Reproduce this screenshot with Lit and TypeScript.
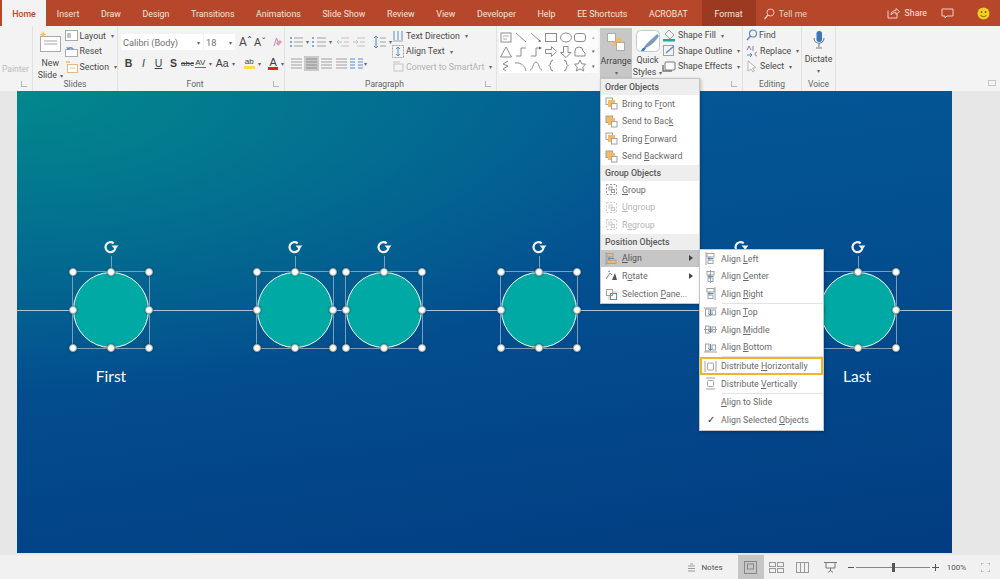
import { LitElement, html, css, svg } from "lit";
import { customElement } from "lit/decorators.js";

const ico = (w: number, h: number, body: unknown, cls = "") =>
  html`<svg class="ic ${cls}" width=${w} height=${h} viewBox="0 0 ${w} ${h}" fill="none">${body}</svg>`;

const accel = (s: string) => {
  const i = s.indexOf("&");
  if (i < 0) return s;
  return html`${s.slice(0, i)}<u>${s[i + 1]}</u>${s.slice(i + 2)}`;
};

const G = "#a2a2a2", O = "#f2b968", B = "#5c8cc4";

const orderIcon = (front: boolean) =>
  ico(13, 13, svg`<rect x="1" y="1" width="6.500" height="6.500" fill=${front ? "#fff" : O} stroke=${G}/><rect x="3" y="3" width="7" height="7" fill=${O}/><rect x="6.500" y="6.500" width="5.500" height="5.500" fill="#fff" stroke=${G}/>`);
const groupIcon = (c: string) =>
  ico(13, 13, svg`<rect x="1.500" y="1.500" width="10" height="10" stroke=${c} stroke-dasharray="2 1.500"/><rect x="4" y="4" width="3" height="3" stroke=${c}/><rect x="6.500" y="6.500" width="3" height="3" stroke=${c}/>`);
const alignH = (x: number) =>
  ico(13, 13, svg`<rect x="3" y="1.500" width="7" height="3.500" stroke=${G}/><rect x="4" y="8" width="5" height="3.500" stroke=${G}/><path d="M${x} 0V13" stroke=${G}/><path d="M9.500 6.500H4M6 4.500L4 6.500l2 2" stroke=${B}/>`);
const alignV = (y: number) =>
  ico(13, 13, svg`<rect x="1.500" y="3" width="3.500" height="7" stroke=${G}/><rect x="8" y="4" width="3.500" height="5" stroke=${G}/><path d="M0 ${y}H13" stroke=${G}/><path d="M6.500 3v6.500M4.500 7.500l2 2 2-2" stroke=${B}/>`);
const distH = ico(13, 13, svg`<path d="M1 1v11M12 1v11" stroke=${G}/><rect x="3.500" y="3" width="6" height="7" rx="1" stroke=${G}/>`);
const distV = ico(13, 13, svg`<path d="M2 1h9M2 12h9" stroke=${G}/><rect x="3.500" y="3.500" width="6" height="6" rx="1" stroke=${G}/>`);

const orderItems = [
  { t: "Bring to F&ront", i: orderIcon(true) },
  { t: "Send to Bac&k", i: orderIcon(false) },
  { t: "Bring &Forward", i: orderIcon(true) },
  { t: "Send &Backward", i: orderIcon(false) },
];
const groupItems = [
  { t: "&Group", i: groupIcon("#999"), d: false },
  { t: "&Ungroup", i: groupIcon("#ccc"), d: true },
  { t: "R&egroup", i: groupIcon("#ccc"), d: true },
];
const subSets = [
  [{ t: "Align &Left", i: alignH(2) }, { t: "Align &Center", i: alignH(6.500) }, { t: "Align &Right", i: alignH(11) }],
  [{ t: "Align &Top", i: alignV(2) }, { t: "Align &Middle", i: alignV(6.500) }, { t: "Align &Bottom", i: alignV(11) }],
];

const tabs = ["Home", "Insert", "Draw", "Design", "Transitions", "Animations", "Slide Show", "Review", "View", "Developer", "Help", "EE Shortcuts", "ACROBAT", "Format"];
const centers = [111, 295, 384, 539, 741, 858];

const lines3 = (x1: number, x2: number, c = "#a0a0a0") =>
  svg`<path d="M${x1} 2H${x2}M${x1} 5H${x2}M${x1} 8H${x2}M${x1} 11H${x2}" stroke=${c}/>`;

const S = "#8c8c8c";
const galleryShapes = [
  svg`<rect x="2" y="2" width="10" height="9" stroke=${S}/><path d="M4 5h6M4 8h4" stroke="#aaa"/>`,
  svg`<path d="M2 2l10 9" stroke=${S}/>`,
  svg`<path d="M2 2l9 8" stroke=${S}/><path d="M12 11l-3-.5 2-2z" fill="#666"/>`,
  svg`<rect x="1.500" y="2.500" width="11" height="8" stroke=${S}/>`,
  svg`<ellipse cx="7" cy="6.500" rx="5.500" ry="4.500" stroke=${S}/>`,
  svg`<rect x="1.500" y="2.500" width="11" height="8" rx="2.500" stroke=${S}/>`,
  svg`<path d="M7 2l5.500 10h-11z" stroke=${S}/>`,
  svg`<path d="M2 11h5V3h5" stroke=${S}/>`,
  svg`<path d="M2 11h5V3h4" stroke=${S}/><path d="M13 3l-3-1.500v3z" fill="#666"/>`,
  svg`<path d="M1.500 4.500h6v-3l5 5-5 5v-3h-6z" stroke=${S}/>`,
  svg`<path d="M4.500 1.500v6h-3l5.500 5 5-5h-3v-6z" stroke=${S}/>`,
  svg`<path d="M2 11V6a4 4 0 018 0l2 2v3z" stroke=${S}/>`,
  svg`<path d="M9 2L4 5l5 2-5 3 3 2" stroke=${S}/>`,
  svg`<path d="M1 4c6-1 10 3 11 8" stroke=${S}/>`,
  svg`<path d="M1 11c3 0 3-8 6-8s3 8 6 8" stroke=${S}/>`,
  svg`<path d="M9 1C6 1 7 6 5 6.500 7 7 6 12 9 12" stroke="#777"/>`,
  svg`<path d="M5 1c3 0 2 5 4 5.500C7 7 8 12 5 12" stroke="#777"/>`,
  svg`<path d="M7 1l1.700 3.800 4 .4-3 2.800.9 4L7 10l-3.600 2 .9-4-3-2.800 4-.4z" stroke=${S}/>`,
];

@customElement("app-root")
export class AppRoot extends LitElement {
  static styles = css`
    :host { display: block; width: 1000px; height: 579px; position: relative; overflow: hidden; font-family: Roboto, "Noto Sans", sans-serif; color: #4a4a4a; background: #e6e6e6; }
    .ic { display: block; flex: none; }
    .tabbar { height: 26px; background: #b7472a; display: flex; align-items: stretch; padding-left: 2px; color: #f6e3dc; font-size: 8.800px; }
    .tab { display: flex; align-items: center; justify-content: center; white-space: nowrap; padding: 2px 10.800px 0; }
    .tab.home { background: #f3f3f3; color: #b7472a; font-weight: 500; width: 44px; padding: 2px 0 0; }
    .tab.format { background: #9c3a21; margin-left: 3px; padding: 2px 13px 0; }
    .tell { display: flex; align-items: center; gap: 4px; margin-left: 7px; opacity: .85; padding-top: 2px; }
    .share { display: flex; align-items: center; gap: 5px; }
    .tb-right { display: flex; align-items: center; margin-left: auto; padding-right: 10px; gap: 14px; }
    .smile { margin-left: 9px; }
    .ribbon { height: 65px; background: #f3f3f3; display: flex; font-size: 8.800px; box-sizing: border-box; }
    .group { display: flex; flex-direction: column; flex: none; box-sizing: border-box; border-right: 1px solid #e2e2e2; position: relative; }
    .g-clip { width: 33px; }
    .g-slides { width: 85px; }
    .g-font { width: 167px; }
    .g-para { width: 212px; }
    .g-draw { width: 246px; }
    .g-edit { width: 59px; }
    .g-voice { width: 34px; }
    .body { flex: 1; display: flex; min-height: 0; }
    .label { height: 14px; line-height: 15px; text-align: center; font-size: 8.500px; color: #666; flex: none; }
    .label.pad { padding-right: 12px; }
    .launcher { position: absolute; right: 5px; bottom: 4px; width: 5px; height: 5px; border-left: 1px solid #b5b5b5; border-bottom: 1px solid #b5b5b5; }
    .painter { color: #bdbdbd; font-size: 8.500px; padding: 38px 0 0 2px; }
    .new { width: 30px; display: flex; flex-direction: column; align-items: center; padding: 5px 0 0 3px; line-height: 12px; text-align: center; }
    .new svg { margin-bottom: 4px; }
    .stack { display: flex; flex-direction: column; justify-content: flex-start; padding-top: 2px; }
    .row { display: flex; align-items: center; gap: 2px; height: 15.500px; white-space: nowrap; }
    .arrow { font-size: 6px; color: #666; margin-left: 3px; }
    .m0 { margin-left: 0; }
    .dis { color: #b0b0b0; }
    .font-body { flex-direction: column; padding: 8px 0 0 3px; gap: 6px; }
    .combos { display: flex; align-items: center; gap: 1px; height: 16px; }
    .combo { background: #fff; height: 16px; display: flex; align-items: center; justify-content: space-between; padding: 0 3px 0 2px; box-sizing: border-box; font-size: 9.200px; color: #707070; }
    .c1 { width: 82px; }
    .c2 { width: 31px; }
    .grow { font-size: 12px; color: #444; margin-left: 3px; width: 11px; }
    .grow.sm { font-size: 11px; }
    .clear { margin-left: 5px; }
    .fmt { display: flex; align-items: center; height: 14px; color: #3f3f3f; font-family: "Liberation Sans", sans-serif; }
    .fmt b, .fmt i, .fmt span.f { width: 15px; text-align: center; flex: none; font-size: 10.500px; }
    .fmt .bold { font-weight: 700; }
    .fmt .abc { font-size: 8px; text-decoration: line-through; }
    .fmt .av { font-size: 8px; border-bottom: 1.500px solid #3b74b8; line-height: 9px; width: 12px; margin-left: 1px; text-align: center; }
    .fmt .aa { font-size: 10.500px; margin-left: 4px; }
    .fmt .hl { font-size: 8px; border-bottom: 3px solid #f3e23a; line-height: 8px; margin-left: 9px; width: 13px; text-align: center; }
    .fmt .red { font-size: 11px; border-bottom: 3px solid #d22; line-height: 10px; margin-left: 7px; width: 11px; text-align: center; }
    .para-left { width: 107px; display: flex; flex-direction: column; padding: 8px 0 0 4px; box-sizing: border-box; }
    .para-row { display: flex; align-items: center; height: 15px; gap: 3px; }
    .ind1 { margin-left: 1px; }
    .sp-ic { margin-left: 5px; }
    .para-row2 { margin-top: 7px; gap: 0; }
    .al { width: 15px; height: 15px; display: flex; align-items: center; justify-content: center; flex: none; }
    .al.on { background: #c9c9c9; }
    .draw-body { align-items: flex-start; padding-left: 2px; }
    .gallery { margin-top: 4px; display: grid; grid-template-columns: repeat(6, 14.800px); grid-auto-rows: 14.300px; width: 89px; background: #fff; justify-items: center; align-items: center; flex: none; }
    .scroll { margin-top: 4px; width: 10px; height: 43px; flex: none; display: grid; grid-template-rows: 1fr 1fr 1fr; font-size: 5px; text-align: center; align-items: center; color: #555; background: #fbfbfb; margin-right: 2px; }
    .arrange { width: 32px; height: 52px; margin-top: 2px; background: #c7c7c7; display: flex; flex-direction: column; align-items: center; flex: none; padding-top: 3px; box-sizing: border-box; line-height: 12px; color: #444; }
    .arrange svg { margin-bottom: 2px; }
    .quick { width: 29px; flex: none; display: flex; flex-direction: column; align-items: center; padding-top: 3px; line-height: 11.500px; text-align: center; margin-left: 1px; }
    .quick svg { margin-bottom: 2px; }
    .shape-stack { padding-top: 1.500px; }
    .edit-stack { padding: 1.500px 0 0 3px; }
    .dictate { width: 100%; display: flex; flex-direction: column; align-items: center; padding-top: 5px; line-height: 12px; }
    .dictate svg { margin-bottom: 4px; }
    .pin { flex: 1; position: relative; }
    .pin i { position: absolute; right: 4px; bottom: 5px; width: 6px; height: 4px; border: 1px solid #c4c4c4; }
    .main { height: 464px; display: flex; background: #e7e7e7; padding: 0 48px 2px 17px; box-sizing: border-box; }
    .slide { flex: 1; position: relative; overflow: hidden; background: radial-gradient(ellipse 75% 65% at 0 0, rgba(2,136,140,1) 0%, rgba(2,136,140,0) 100%), linear-gradient(172deg, #045a98 0%, #034f90 45%, #023c81 100%); }
    .line { position: absolute; left: 0; right: 0; top: 219px; height: 1px; background: #a9c3d8; }
    .sel { position: absolute; top: 180px; width: 78px; height: 78px; box-sizing: border-box; border: 1px solid #7d9fbc; }
    .circle { position: absolute; inset: 0; border-radius: 50%; background: #00a9a4; border: 1.500px solid #fff; box-sizing: border-box; }
    .h { position: absolute; width: 8px; height: 8px; background: #fff; border-radius: 50%; border: .5px solid #9aa; box-shadow: 0 0 2px rgba(20,40,60,.7); box-sizing: border-box; transform: translate(-50%, -50%); }
    .rotstem { position: absolute; left: 50%; top: -16px; height: 16px; width: 1px; background: #7d9fbc; }
    .rot { position: absolute; left: calc(50% - 8px); top: -33px; }
    .cap { position: absolute; top: 276px; width: 60px; text-align: center; color: #fff; font: 15.500px/18px Lato, "Open Sans", sans-serif; }
    .status { height: 24px; background: #f1f1f1; display: flex; align-items: center; justify-content: flex-end; font-size: 8px; color: #555; padding-right: 10px; box-sizing: border-box; }
    .notes { display: flex; align-items: center; gap: 6px; margin-right: 15px; }
    .vw { width: 26px; height: 24px; display: flex; align-items: center; justify-content: center; }
    .vw.on { background: #c6c6c6; }
    .vw.gap { margin-left: 2px; }
    .zoom { display: flex; align-items: center; margin-left: 4px; gap: 2px; }
    .track { width: 74px; height: 1px; background: #888; position: relative; }
    .thumb { position: absolute; left: 36px; top: -4px; width: 3px; height: 9px; background: #555; }
    .pct { margin: 0 15px 0 8px; }
    .menu { position: absolute; background: #fff; border: 1px solid #c6c6c6; box-shadow: 1px 1px 3px rgba(0,0,0,.25); font-size: 8.800px; color: #6a6a6a; box-sizing: border-box; z-index: 5; }
    .m1 { left: 600px; top: 78px; width: 100px; height: 226px; }
    .m2 { left: 699px; top: 249px; width: 125px; height: 182px; z-index: 6; }
    .mh { height: 16px; line-height: 16px; background: #eee; font-weight: 500; padding-left: 4px; color: #5a5a5a; }
    .mi { height: 17.500px; display: flex; align-items: center; padding-left: 4px; gap: 4px; white-space: nowrap; position: relative; }
    .mi .sp { width: 13px; flex: none; text-align: center; color: #333; font-size: 10px; }
    .mi.dis { color: #b5b5b5; }
    .mi.on { background: #c6c6c6; color: #555; }
    .mi.tall { height: 19px; }
    .caret { position: absolute; right: 6px; top: 50%; margin-top: -3px; border-left: 4px solid #444; border-top: 3px solid transparent; border-bottom: 3px solid transparent; }
    .sep { height: 1px; background: #e3e3e3; margin-left: 22px; }
    .m2 .mi.hot { outline: 2px solid #f0b429; outline-offset: -2px; height: 18px; }
  `;

  private handles() {
    const pts = [[0, 0], [50, 0], [100, 0], [0, 50], [100, 50], [0, 100], [50, 100], [100, 100]];
    return pts.map(([x, y]) => html`<span class="h" style="left:${x}%;top:${y}%"></span>`);
  }

  private item(it: { t: string; i: unknown; d?: boolean }) {
    return html`<div class="mi ${it.d ? "dis" : ""}">${it.i}<span>${accel(it.t)}</span></div>`;
  }

  render() {
    return html`
      <div class="tabbar">
        ${tabs.map((t) => html`<div class="tab ${t === "Home" ? "home" : ""} ${t === "Format" ? "format" : ""}">${t}</div>`)}
        <div class="tell">
          ${ico(12, 12, svg`<circle cx="7.500" cy="4.500" r="3.500" stroke="#f6e3dc"/><path d="M5 7L1.500 11" stroke="#f6e3dc" stroke-width="1.300"/>`)}
          <span>Tell me</span>
        </div>
        <div class="tb-right">
          <div class="share">
            ${ico(13, 12, svg`<path d="M1 3.500V11h9V7M4 8c0-3 2-4.500 5-4.500V1.500l3.500 3-3.500 3V5.500C7 5.500 5 6 4 8z" stroke="#f0cfc4"/>`)}
            <span>Share</span>
          </div>
          ${ico(13, 11, svg`<path d="M1 1h11v7H6l-2 2V8H1z" stroke="#f0cfc4"/>`)}
          ${ico(13, 13, svg`<circle cx="6.500" cy="6.500" r="6" fill="#f5cf1e"/><circle cx="4.500" cy="5" r=".9" fill="#7a5a10"/><circle cx="8.500" cy="5" r=".9" fill="#7a5a10"/><path d="M3.500 8c1.500 2.200 4.500 2.200 6 0" stroke="#7a5a10"/>`, "smile")}
        </div>
      </div>

      <div class="ribbon">
        <div class="group g-clip">
          <div class="body"><div class="painter">Painter</div></div>
          <div class="label"></div>
          <span class="launcher"></span>
        </div>

        <div class="group g-slides">
          <div class="body">
            <div class="new">
              ${ico(24, 22, svg`<rect x="2.500" y="5.500" width="20" height="15" fill="#fff" stroke="#aaa"/><path d="M6 10h13M6 13h13" stroke="#c4c4c4" stroke-width="1.500"/><path d="M5 0l1 2.500 2.500 1L6 4.500 5 7 4 4.500 1.500 3.500l2.500-1z" fill="#f2c14e"/>`)}
              <span>New</span><span>Slide<span class="arrow">▾</span></span>
            </div>
            <div class="stack">
              <div class="row">${ico(13, 11, svg`<rect x=".5" y=".5" width="12" height="10" fill="#fff" stroke="#aaa"/><rect x="2" y="3" width="4" height="5" fill="#c4c4c4"/>`)}Layout<span class="arrow">▾</span></div>
              <div class="row">${ico(13, 11, svg`<rect x=".5" y="3.500" width="12" height="7" fill="#fff" stroke="#aaa"/><path d="M3 3a3 3 0 015 0" stroke=${B} stroke-width="1.500"/><path d="M1 1l2 3 2-2z" fill=${B}/>`)}Reset</div>
              <div class="row">${ico(13, 12, svg`<rect x="2.500" y="3.500" width="10" height="8" fill="#fff" stroke="#e6b880"/><path d="M1 1h4" stroke=${O} stroke-width="1.500"/><path d="M5 7h5" stroke="#c4c4c4"/>`)}Section<span class="arrow">▾</span></div>
            </div>
          </div>
          <div class="label">Slides</div>
        </div>

        <div class="group g-font">
          <div class="body font-body">
            <div class="combos">
              <div class="combo c1"><span>Calibri (Body)</span><span class="arrow">▾</span></div>
              <div class="combo c2"><span>18</span><span class="arrow">▾</span></div>
              <span class="grow">Aˆ</span><span class="grow sm">Aˇ</span>
              ${ico(11, 12, svg`<path d="M3 10L5.500 2 8 8" stroke="#b889c9"/><path d="M5 7l4-3 2 2-4 4z" fill="#e79ab4"/>`, "clear")}
            </div>
            <div class="fmt">
              <b>B</b><i>I</i><span class="f"><u>U</u></span><span class="f bold">S</span>
              <span class="abc">abc</span><span class="av">AV</span><span class="arrow">▾</span>
              <span class="aa">Aa</span><span class="arrow">▾</span>
              <span class="hl">ab</span><span class="arrow">▾</span>
              <span class="red">A</span><span class="arrow">▾</span>
            </div>
          </div>
          <div class="label pad">Font</div>
          <span class="launcher"></span>
        </div>

        <div class="group g-para">
          <div class="body">
            <div class="para-left">
              <div class="para-row">
                ${ico(14, 12, svg`<path d="M5 2H14M5 6H14M5 10H14" stroke=${G}/><path d="M1 2h2M1 6h2M1 10h2" stroke=${B} stroke-width="1.600"/>`)}<span class="arrow m0">▾</span>
                ${ico(14, 12, svg`<path d="M5 2H14M5 6H14M5 10H14" stroke=${G}/><path d="M1 1v2M1 5v2M1 9v2" stroke=${B} stroke-width="1.400"/>`)}<span class="arrow m0">▾</span>
                ${ico(13, 12, svg`<path d="M5 2H13M5 10H13M8 6H13" stroke="#c4c4c4"/><path d="M6 6H1M3 4L1 6l2 2" stroke="#a8c8d0"/>`, "ind1")}
                ${ico(13, 12, svg`<path d="M5 2H13M5 10H13M8 6H13" stroke="#c4c4c4"/><path d="M1 6H6M4 4l2 2-2 2" stroke="#a8c8d0"/>`)}
                ${ico(13, 14, svg`<path d="M3 1v12M1 3l2-2 2 2M1 11l2 2 2-2" stroke=${B}/><path d="M7 3h6M7 7h6M7 11h6" stroke=${G}/>`, "sp-ic")}<span class="arrow m0">▾</span>
              </div>
              <div class="para-row para-row2">
                <span class="al">${ico(11, 13, lines3(0, 11))}</span>
                <span class="al on">${ico(11, 13, lines3(0, 11, "#8c8c8c"))}</span>
                <span class="al">${ico(11, 13, lines3(0, 11))}</span>
                <span class="al">${ico(11, 13, lines3(0, 11))}</span>
                <span class="al">${ico(13, 13, svg`<path d="M0 2h5M0 5h5M0 8h5M0 11h5M8 2h5M8 5h5M8 8h5M8 11h5" stroke=${B}/>`)}</span>
                <span class="arrow m0">▾</span>
              </div>
            </div>
            <div class="stack">
              <div class="row">${ico(12, 13, svg`<path d="M2 2v9M6 2v9M10 2v9" stroke=${B}/><path d="M1 12h10" stroke=${G}/>`)}Text Direction<span class="arrow">▾</span></div>
              <div class="row">${ico(12, 13, svg`<rect x=".5" y=".5" width="11" height="12" stroke=${G} stroke-dasharray="2 1"/><path d="M6 2v9M4 4l2-2 2 2M4 9l2 2 2-2" stroke=${B}/>`)}Align Text<span class="arrow">▾</span></div>
              <div class="row dis">${ico(12, 11, svg`<rect x="2" y="3" width="9" height="7" stroke="#c4c4c4"/><path d="M1 1h7" stroke="#c4c4c4"/>`)}Convert to SmartArt<span class="arrow">▾</span></div>
            </div>
          </div>
          <div class="label pad">Paragraph</div>
          <span class="launcher"></span>
        </div>

        <div class="group g-draw">
          <div class="body draw-body">
            <div class="gallery">${galleryShapes.map((s) => ico(14, 13, s))}</div>
            <div class="scroll"><span class="dis">▴</span><span>▾</span><span>▾</span></div>
            <div class="arrange">
              ${ico(24, 22, svg`<rect x="9" y="7" width="9" height="8" fill=${O}/><rect x="3.500" y="2.500" width="8" height="8" fill="#fff" stroke="#aaa"/><rect x="12.500" y="11.500" width="8" height="8" fill="#fff" stroke="#aaa"/>`)}
              <span>Arrange</span><span class="arrow m0">▾</span>
            </div>
            <div class="quick">
              ${ico(26, 24, svg`<rect x="1.500" y="1.500" width="23" height="21" rx="4" fill="#fff" stroke="#c8c8c8"/><path d="M8 20c2-5 8-9 14-15l2 2c-4 6-9 11-16 13z" fill="#7d9abd"/><path d="M6 22c1-3 3-4 5-3l-2 3z" fill="#2f74c0"/>`)}
              <span>Quick</span><span>Styles<span class="arrow">▾</span></span>
            </div>
            <div class="stack shape-stack">
              <div class="row">${ico(14, 14, svg`<path d="M7 2l5 5-4 4-5-5z" stroke=${G}/><rect x="1" y="11" width="12" height="2.500" fill="#1fa89f"/>`)}Shape Fill<span class="arrow">▾</span></div>
              <div class="row">${ico(14, 13, svg`<rect x="1.500" y="1.500" width="10" height="10" stroke=${G}/><path d="M4 9l8-7" stroke=${B} stroke-width="1.500"/>`)}Shape Outline<span class="arrow">▾</span></div>
              <div class="row">${ico(14, 12, svg`<rect x="3" y="2" width="10" height="8" rx="1" fill="#fff" stroke="#777"/><path d="M1 5v6h9" stroke="#777" stroke-width="1.500"/>`)}Shape Effects<span class="arrow">▾</span></div>
            </div>
          </div>
          <div class="label"></div>
          <span class="launcher"></span>
        </div>

        <div class="group g-edit">
          <div class="body">
            <div class="stack edit-stack">
              <div class="row">${ico(11, 12, svg`<circle cx="7" cy="4.500" r="3.500" stroke=${B} stroke-width="1.200"/><path d="M4.500 7L1 11" stroke=${B} stroke-width="1.500"/>`)}Find</div>
              <div class="row">${ico(12, 12, svg`<path d="M1 5l2-4 2 4M7 1v5" stroke="#8a7ab4"/><path d="M1 10h5M4 8l2 2-2 2" stroke=${B}/><path d="M11 7a2 2 0 100 4" stroke="#b87aa8"/>`)}Replace<span class="arrow">▾</span></div>
              <div class="row">${ico(12, 13, svg`<path d="M2 1v10l3-2 2 3 1.500-1-2-3 3.500-.5z" fill="#fff" stroke="#b5b5b5"/>`)}Select<span class="arrow">▾</span></div>
            </div>
          </div>
          <div class="label">Editing</div>
        </div>

        <div class="group g-voice">
          <div class="body">
            <div class="dictate">
              ${ico(12, 18, svg`<rect x="3.500" y="0" width="5.500" height="11" rx="2.700" fill="#3f74b5"/><path d="M1 7c0 7 10 7 10 0M6 12v4M3 17h6" stroke="#6c7e94" stroke-width="1.100"/>`)}
              <span>Dictate</span><span class="arrow m0">▾</span>
            </div>
          </div>
          <div class="label">Voice</div>
        </div>
        <div class="pin"><i></i></div>
      </div>

      <div class="main">
        <div class="slide">
          <div class="line"></div>
          ${centers.map((c) => html`
            <div class="sel" style="left:${c - 17 - 39}px">
              <div class="circle"></div>
              <span class="rotstem"></span>
              ${ico(16, 16, svg`<path d="M12.500 8.500a5 5 0 11-1.800-4.200" stroke="#f2f2f2" stroke-width="2.200"/><path d="M8.500 6.500l7 0-3.500 4z" fill="#f2f2f2"/>`, "rot")}
              ${this.handles()}
            </div>`)}
          <div class="cap" style="left:${111 - 17 - 30}px">First</div>
          <div class="cap" style="left:${857 - 17 - 30}px">Last</div>
        </div>
      </div>

      <div class="status">
        <div class="notes">${ico(7, 9, svg`<path d="M0 3h7M0 5.500h7M0 8h7M2 1h3" stroke="#999"/>`)}Notes</div>
        <div class="vw on">${ico(13, 13, svg`<rect x=".5" y=".5" width="12" height="12" stroke="#888"/><rect x="3.500" y="3" width="6" height="5" stroke="#888"/>`)}</div>
        <div class="vw">${ico(15, 11, svg`<rect x=".5" y=".5" width="6" height="4" stroke="#999"/><rect x="8.500" y=".5" width="6" height="4" stroke="#999"/><rect x=".5" y="6.500" width="6" height="4" stroke="#999"/><rect x="8.500" y="6.500" width="6" height="4" stroke="#999"/>`)}</div>
        <div class="vw">${ico(13, 11, svg`<rect x=".5" y=".5" width="12" height="10" stroke="#999"/><path d="M4.500 1v9M8.500 1v9" stroke="#999"/>`)}</div>
        <div class="vw gap">${ico(13, 12, svg`<path d="M0 1.500h13M2 2v5h9V2M6.500 7v3M4 11.500l2.500-2 2.500 2" stroke="#777"/>`)}</div>
        <div class="zoom">
          ${ico(6, 3, svg`<path d="M0 1.500h6" stroke="#555"/>`)}
          <div class="track"><span class="thumb"></span></div>
          ${ico(7, 7, svg`<path d="M0 3.500h7M3.500 0v7" stroke="#555"/>`)}
        </div>
        <span class="pct">100%</span>
        ${ico(9, 9, svg`<path d="M0 2.500V0h2.500M6.500 0H9v2.500M9 6.500V9H6.500M2.500 9H0V6.500" stroke="#999"/>`)}
      </div>

      <div class="menu m1">
        <div class="mh">Order Objects</div>
        ${orderItems.map((i) => this.item(i))}
        <div class="mh">Group Objects</div>
        ${groupItems.map((i) => this.item(i))}
        <div class="mh">Position Objects</div>
        <div class="mi on">${ico(13, 13, svg`<rect x="2" y="1.500" width="6" height="3.500" fill=${O} stroke=${G}/><rect x="2" y="8" width="9" height="3.500" fill=${O} stroke=${G}/><path d="M1 0v13" stroke=${G}/><path d="M9 6.500H3M5 4.500L3 6.500l2 2" stroke=${B}/>`)}<span>${accel("&Align")}</span><span class="caret"></span></div>
        <div class="mi">${ico(13, 13, svg`<path d="M1 10l4-6 2 2M3 3l2-1" stroke="#888"/><path d="M7 11l3-7 2 7z" fill="#555"/>`)}<span>R<u>o</u>tate</span><span class="caret"></span></div>
        <div class="mi tall">${ico(13, 13, svg`<rect x="1.500" y="1.500" width="6" height="6" stroke=${G}/><rect x="5.500" y="5.500" width="6" height="6" stroke=${B}/><path d="M7 4h5M4 8v4" stroke=${O}/>`)}<span>Selection ${accel("&Pane...")}</span></div>
      </div>

      <div class="menu m2">
        ${subSets[0].map((i) => this.item(i))}
        <div class="sep"></div>
        ${subSets[1].map((i) => this.item(i))}
        <div class="sep"></div>
        <div class="mi hot">${distH}<span>Distribute ${accel("&Horizontally")}</span></div>
        <div class="mi">${distV}<span>Distribute ${accel("&Vertically")}</span></div>
        <div class="sep"></div>
        <div class="mi"><span class="sp"></span><span>${accel("&Align to Slide")}</span></div>
        <div class="mi"><span class="sp">✓</span><span>${accel("Align Selected &Objects")}</span></div>
      </div>
    `;
  }
}
